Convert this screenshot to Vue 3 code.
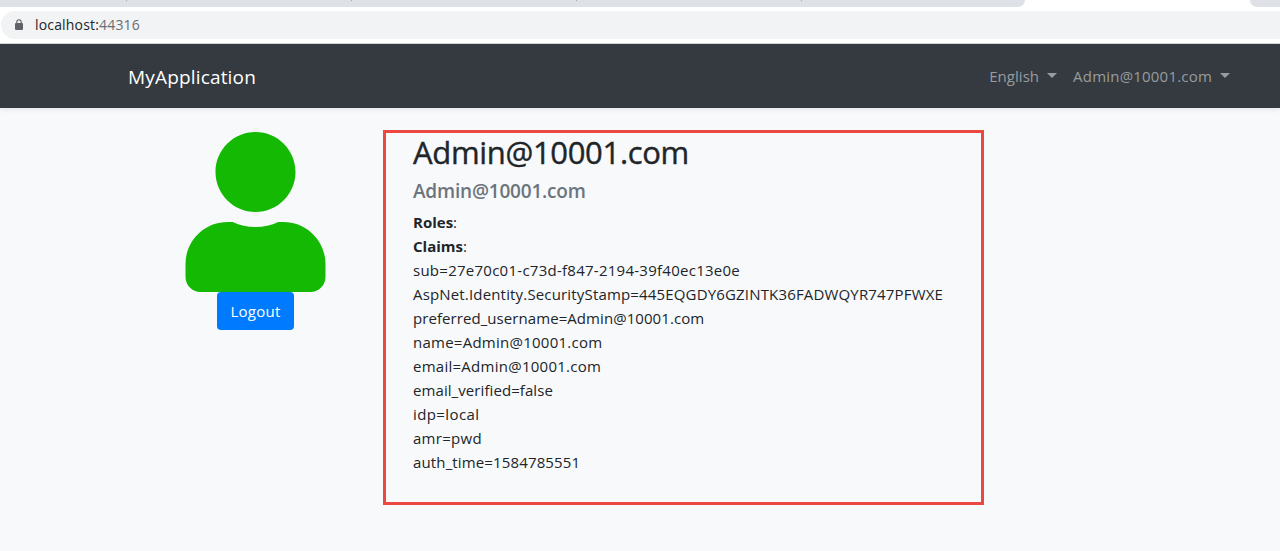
<script setup>
const claims = [
  { text: 'sub=27e70c01-c73d-f847-2194-39f40ec13e0e', spacing: 0.26 },
  { text: 'AspNet.Identity.SecurityStamp=445EQGDY6GZINTK36FADWQYR747PFWXE', spacing: 0.165 },
  { text: 'preferred_username=Admin@10001.com', spacing: 0.07 },
  { text: 'name=Admin@10001.com', spacing: 0.25 },
  { text: 'email=Admin@10001.com', spacing: 0.26 },
  { text: 'email_verified=false', spacing: 0.08 },
  { text: 'idp=local', spacing: 0.4 },
  { text: 'amr=pwd', spacing: 0.28 },
  { text: 'auth_time=1584785551', spacing: 0.14 },
]
</script>

<template>
  <div class="window">
    <div class="tabs">
      <div class="tab-group left"><i></i><i></i><i></i><i></i></div>
      <div class="tab-group right"></div>
    </div>
    <div class="toolbar">
      <div class="address">
        <svg class="lock" width="8" height="11" viewBox="0 0 8 11">
          <path d="M1.8 5V3a2.2 2.2 0 0 1 4.4 0v2" fill="none" stroke="#5f6368" stroke-width="1.1" />
          <rect x="0" y="4" width="8" height="7" rx="1" fill="#5f6368" />
        </svg>
        <span class="url">localhost:<span class="port">44316</span></span>
      </div>
    </div>
    <nav class="navbar">
      <a class="brand">MyApplication</a>
      <div class="menu">
        <a class="link"><span class="english">English</span><b class="caret"></b></a>
        <a class="link"><span class="account">Admin@10001.com</span><b class="caret"></b></a>
      </div>
    </nav>
    <main class="content">
      <div class="profile">
        <svg class="avatar" width="141" height="160" viewBox="-1.6 0 451.2 512">
          <path fill="#14b903" d="M224 256c70.7 0 128-57.3 128-128S294.7 0 224 0 96 57.3 96 128s57.3 128 128 128zm89.6 32h-16.7c-22.2 10.2-46.9 16-72.9 16s-50.6-5.8-72.9-16h-16.7C60.2 288 0 348.2 0 422.4V464c0 26.5 21.5 48 48 48h352c26.5 0 48-21.5 48-48v-41.6c0-74.2-60.2-134.4-134.4-134.4z" />
        </svg>
        <button class="logout">Logout</button>
      </div>
      <section class="details">
        <h2>Admin@10001.com</h2>
        <h5>Admin@10001.com</h5>
        <p><strong>Roles</strong>:</p>
        <p><strong>Claims</strong>:</p>
        <p v-for="c in claims" :key="c.text">
          <span :style="{ letterSpacing: c.spacing + 'px' }">{{ c.text }}</span>
        </p>
      </section>
    </main>
  </div>
</template>

<style>
body { margin: 0; background: #f8f9fb; }
</style>

<style scoped>
* { box-sizing: border-box; }
.window {
  height: 551px;
  overflow: hidden;
  background: #f8f9fb;
  color: #212529;
  font-family: "Open Sans", "Noto Sans", sans-serif;
  font-size: 15px;
  line-height: 24px;
}
.tabs { display: flex; justify-content: space-between; height: 7px; background: #fff; }
.tab-group { background: #dee1e6; }
.left { width: 1025px; border-bottom-right-radius: 7px; display: flex; gap: 224px; padding-left: 126px; }
.left i { width: 1px; height: 1px; background: #a5a8ad; }
.right { width: 30px; border-bottom-left-radius: 7px; }
.toolbar { height: 37px; padding: 4px 0 0 1px; background: #fff; border-bottom: 1px solid #d5d8dc; }
.address {
  display: flex;
  align-items: center;
  height: 28px;
  padding-left: 14px;
  border-radius: 14px 0 0 14px;
  background: #f1f3f4;
}
.lock { margin-bottom: 1px; }
.url { margin-left: 12px; font-size: 14px; letter-spacing: .17px; }
.port { color: #6b6e72; }
.navbar {
  position: relative;
  display: flex;
  align-items: center;
  justify-content: space-between;
  height: 64px;
  padding: 0 50px 0 128px;
  background: #343a40;
  box-shadow: 0 2px 5px rgba(0, 0, 0, .07);
}
.brand { padding-top: 2px; color: #fff; font-size: 19px; letter-spacing: .17px; }
.menu { display: flex; gap: 16px; color: #999c9f; }
.link { display: flex; align-items: center; }
.english { letter-spacing: .05px; }
.account { letter-spacing: .2px; }
.caret { margin: -2px 0 0 8px; border: 5px solid transparent; border-top-color: currentColor; border-bottom: 0; }
.content { display: flex; align-items: flex-start; padding: 22px 0 0 128px; }
.profile { display: flex; flex-direction: column; align-items: center; width: 255px; padding-top: 2px; }
.avatar { display: block; }
.logout {
  width: 77px;
  height: 38px;
  padding: 0;
  border: 0;
  border-radius: 4px;
  background: #007bff;
  color: #fff;
  font: inherit;
  letter-spacing: .25px;
}
.details { width: 601px; height: 375px; padding: 0 27px; border: 3px solid #eb4842; white-space: nowrap; }
h2 {
  margin: 0 0 9px;
  font-size: 31px;
  font-weight: 500;
  line-height: 38px;
  letter-spacing: -.33px;
  -webkit-text-stroke: .4px currentColor;
}
h5 { margin: 0 0 8px; font-size: 19px; font-weight: 600; line-height: 22px; letter-spacing: -.2px; color: #6c757d; }
p { margin: 0; }
</style>
